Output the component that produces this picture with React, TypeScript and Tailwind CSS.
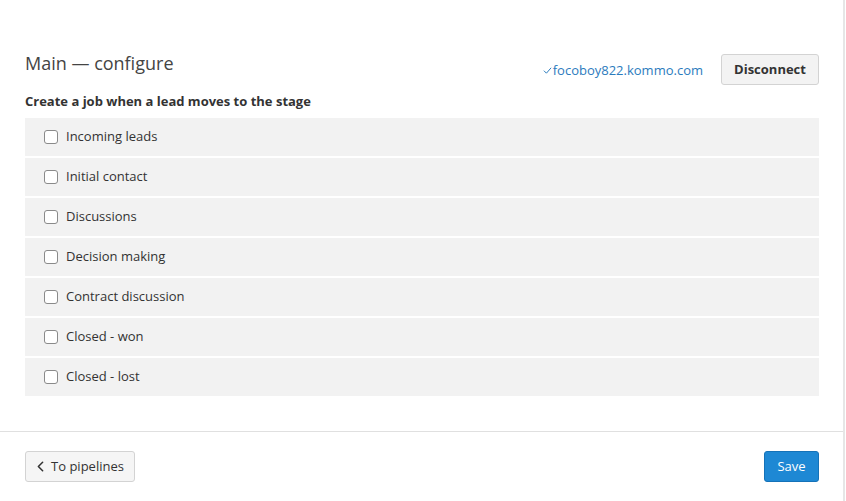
import { ChevronLeft } from "lucide-react";

const stages = [
  "Incoming leads",
  "Initial contact",
  "Discussions",
  "Decision making",
  "Contract discussion",
  "Closed - won",
  "Closed - lost",
];

export default function App() {
  return (
    <div className="w-[846px] h-[501px] bg-white flex" style={{ fontFamily: '"Open Sans", "Liberation Sans", sans-serif' }}>
      <div className="w-[845px] h-full border-r-2 border-[#e6e6e6] flex flex-col">
        <div className="pl-[25px] pr-[24px] pt-[51px]">
          {/* Header */}
          <div className="flex items-start justify-between">
            <h1 className="text-[18px] leading-[24px] text-[#444] font-normal">Main — configure</h1>
            <div className="flex items-center gap-[18px] mt-[3px]">
              <a className="flex items-center text-[13px] leading-[18px] text-[#2b7bbd]">
                <svg width="9" height="9" viewBox="0 0 10 10" className="mr-[1px] mt-[2px]">
                  <path d="M1 5.2 L3.8 8 L9 2" fill="none" stroke="#2b7bbd" strokeWidth="1.1" />
                </svg>
                focoboy822.kommo.com
              </a>
              <button className="h-[31px] w-[98px] rounded-[3px] border border-[#d3d3d3] bg-[#f3f3f3] text-[13px] font-bold text-[#333]">
                Disconnect
              </button>
            </div>
          </div>

          <h2 className="mt-[7px] mb-[8px] text-[13px] leading-[18px] font-bold text-[#333]">
            Create a job when a lead moves to the stage
          </h2>

          <div className="flex flex-col gap-[2px]">
            {stages.map((s) => (
              <label key={s} className="h-[38px] bg-[#f2f2f2] flex items-center pl-[19px] gap-[8px]">
                <span className="w-[14px] h-[14px] rounded-[3px] border border-[#8a8a8a] bg-white" />
                <span className="text-[13px] text-[#333]">{s}</span>
              </label>
            ))}
          </div>
        </div>

        {/* Footer */}
        <div className="mt-[35px] border-t border-[#e0e0e0] pt-[19px] pl-[25px] pr-[24px] flex items-center justify-between">
          <button className="h-[31px] w-[110px] rounded-[3px] border border-[#d3d3d3] bg-[#f5f5f5] flex items-center justify-center gap-[2px] text-[13px] text-[#333]">
            <ChevronLeft size={17} strokeWidth={2.2} className="-ml-[4px]" />
            To pipelines
          </button>
          <button className="h-[31px] w-[55px] rounded-[3px] border border-[#1572b8] bg-[#1e88d4] text-[13px] text-white">
            Save
          </button>
        </div>
      </div>
    </div>
  );
}
